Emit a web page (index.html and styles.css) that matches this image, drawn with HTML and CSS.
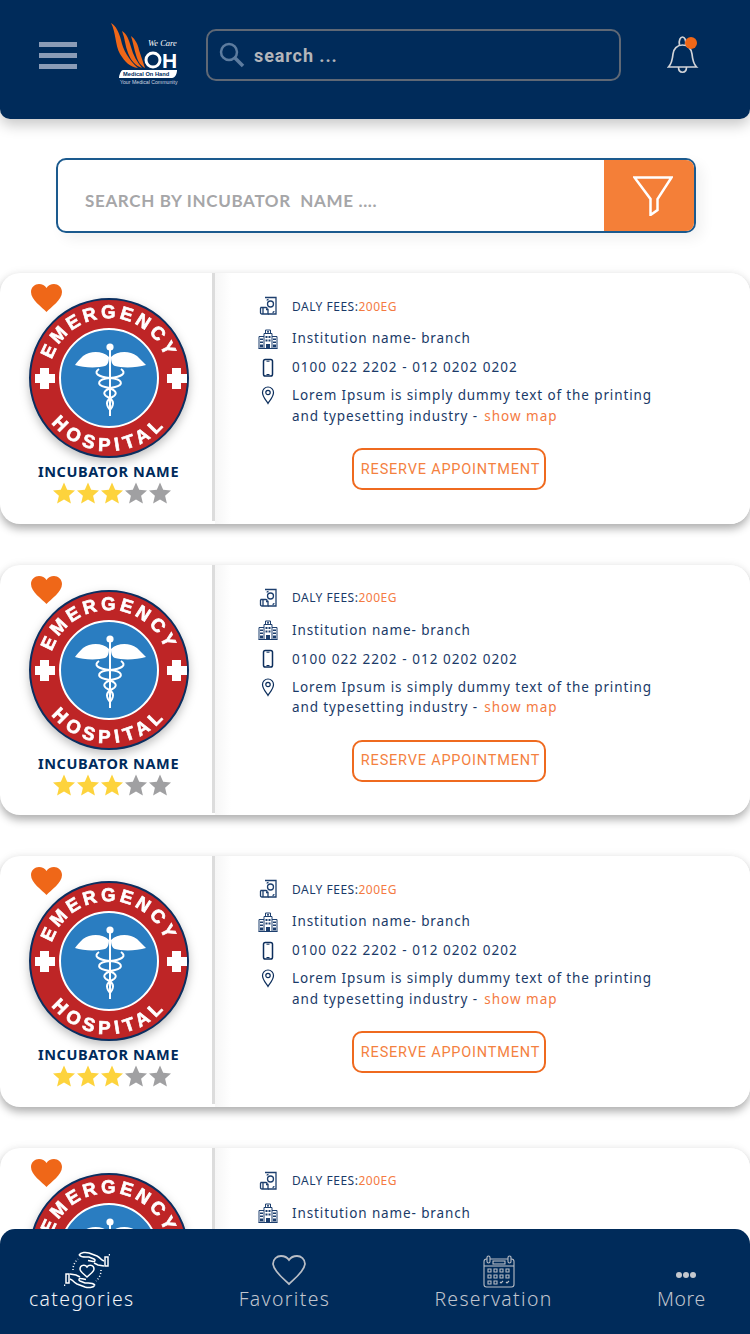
FILE: index.html
```html
<!DOCTYPE html>
<html lang="en">
    <head>
        <meta charset="UTF-8" />
        <meta name="viewport" content="width=device-width, initial-scale=1.0" />
        <title>Medical On Hand</title>
        <link rel="stylesheet" href="styles.css">
    </head>
    <body>
        <svg class="defs" aria-hidden="true">
            <defs>
                <path id="arc-top" d="M 23.6 100.5 A 60 60 0 1 1 136.4 100.5" />
                <path id="arc-bottom" d="M 7 80 A 73 73 0 0 0 153 80" />
            </defs>
            <symbol id="badge" viewBox="0 0 160 160">
                <circle cx="80" cy="80" r="79" fill="#be2526" stroke="#0b2f60" stroke-width="2" />
                <circle cx="80" cy="80" r="49" fill="#2a7dc1" stroke="#fff" stroke-width="2" />
                <text class="badge-text" text-anchor="middle"><textPath href="#arc-top" startOffset="50%">EMERGENCY</textPath></text>
                <text class="badge-text badge-text-low" text-anchor="middle"><textPath href="#arc-bottom" startOffset="50%">HOSPITAL</textPath></text>
                <path fill="#fff" d="M11 70h9v6h6v9h-6v6h-9v-6h-5v-9h5z" />
                <path fill="#fff" d="M143 70h9v6h6v9h-6v6h-9v-6h-5v-9h5z" />
                <circle cx="81" cy="49" r="3.6" fill="#fff" />
                <path fill="#fff" d="M80 59c-6-6-18-7-26-1-3 3-6 6-8 9 8 3 24 3 30 1 3-1 4-5 4-9zM82 59c6-6 18-7 26-1 3 3 6 6 9 9-9 3-25 3-31 1-3-1-4-5-4-9z" />
                <path fill="none" stroke="#fff" stroke-width="2" d="M81 52v66M70 71c-6 4-1 8 11 9 13 1 14 7 5 9-10 2-13 6-9 9 5 3 9 5 6 11-2 3-2 3-2 3M92 71c6 4 1 8-11 9-13 1-14 7-5 9 10 2 13 6 9 9-5 3-9 5-6 11 2 3 2 3 2 3" />
            </symbol>
            <symbol id="heart-solid" viewBox="0 0 31 28">
                <path fill="#ef6718" d="M15.5 28C11 23 0 16 0 8 0 3 4 0 8 0c3 0 6 1.500 7.500 4C17 1.500 20 0 23 0c4 0 8 3 8 8 0 8-11 15-15.500 20z" />
            </symbol>
            <symbol id="star" viewBox="0 0 24 24">
                <path d="M12 1.500l3.200 7.300 7.800.7-5.900 5.200 1.800 7.800-6.900-4.100-6.900 4.100 1.800-7.800L1 9.500l7.800-.7z" />
            </symbol>
            <symbol id="ico-fees" viewBox="0 0 20 20">
                <g fill="none" stroke="#1d3f6e" stroke-width="1.300">
                    <path d="M7 1.500h11v16.500H10" />
                    <circle cx="12.500" cy="8" r="3" />
                    <path d="M9 4.500c0-1 1-1 1.500-1M16 15c0 1-.5 1.500-1.500 1.500" />
                    <path d="M3 11.500h5c1.500 0 1.500 2 0 2h2v4.500H4c-1 0-1.500-.5-1.500-1.500v-4z" />
                    <path d="M5 11.500v6.500" />
                </g>
            </symbol>
            <symbol id="ico-building" viewBox="0 0 20 20">
                <g fill="none" stroke="#1d3f6e" stroke-width="1">
                    <path d="M.5 19.500h19M1 19.500V7.500h5M19 19.500V7.500h-5M6 19.500V4.500h8v15" />
                    <path d="M7.500 4.500V1h5v3.500" />
                    <path d="M10 1.800v2M9 2.800h2" />
                </g>
                <g fill="#1d3f6e">
                    <rect x="2" y="9.500" width="3" height="1.500" />
                    <rect x="2" y="12.500" width="3" height="1.500" />
                    <rect x="2" y="15.500" width="3" height="3" />
                    <rect x="15" y="9.500" width="3" height="1.500" />
                    <rect x="15" y="12.500" width="3" height="1.500" />
                    <rect x="15" y="15.500" width="3" height="3" />
                    <rect x="7.500" y="7" width="2" height="2" />
                    <rect x="10.500" y="7" width="2" height="2" />
                    <rect x="7.500" y="10.500" width="2" height="2" />
                    <rect x="10.500" y="10.500" width="2" height="2" />
                    <rect x="8" y="15" width="4" height="4.500" />
                </g>
            </symbol>
            <symbol id="ico-phone" viewBox="0 0 20 20">
                <rect x="5.500" y="1.500" width="9" height="16.500" rx="1.800" fill="none" stroke="#0c2e5c" stroke-width="1.500" />
                <path stroke="#0c2e5c" d="M8.500 3.200h3M8.500 16.500h3" />
            </symbol>
            <symbol id="ico-pin" viewBox="0 0 20 20">
                <path fill="none" stroke="#0c2e5c" stroke-width="1.200" d="M10 18.500C7.500 14.500 4.500 11.500 4.500 7.500a5.500 5.500 0 0 1 11 0c0 4-3 7-5.500 11z" />
                <circle cx="10" cy="7.500" r="2.200" fill="none" stroke="#0c2e5c" stroke-width="1.200" />
            </symbol>
        </svg>

        <header class="topbar">
            <div class="menu-btn"><span></span><span></span><span></span></div>
            <svg class="logo" viewBox="0 0 67 62">
                <path fill="#ef6718" d="M0 0c5 3 8 9 10 17 2 10 8 20 17 28-8-1-13-6-18-14C4 22 5 9 0 0z" />
                <path fill="#ef6718" d="M11 8c5 3 7 9 9 16 2 8 6 15 11 21-6-2-11-7-14-15-3-7-3-15-6-22z" />
                <path fill="#ef6718" d="M20 13c4 3 7 8 8 14 2 6 4 12 6 18-4-2-7-6-9-13-2-6-3-13-5-19z" />
                <text class="logo-care" x="37" y="23">We Care</text>
                <circle cx="42" cy="37" r="7" fill="none" stroke="#fff" stroke-width="3" />
                <text class="logo-oh" x="51" y="45">H</text>
                <path fill="#fff" d="M12 47h54c0 4-2 8-5 8H8c0-3 2-8 4-8z" />
                <text class="logo-med" x="12" y="53">Medical On Hand</text>
                <text class="logo-tag" x="9" y="61">Your Medical Community</text>
            </svg>
            <div class="top-search">
                <svg class="top-search-icon" viewBox="0 0 26 26">
                    <circle cx="10" cy="10" r="8" fill="none" stroke="#5d7c9f" stroke-width="2.500" />
                    <path d="M16 16l8 8" stroke="#5d7c9f" stroke-width="3.500" />
                </svg>
                <span>search ...</span>
            </div>
            <svg class="bell" viewBox="0 0 32 38">
                <g fill="none" stroke="#d2d4d8" stroke-width="1.700">
                    <path d="M1.500 31h28c-3-3-4-8-4.500-13-.5-5-4-9-9.500-9S6.500 13 6 18c-.5 5-1.500 10-4.500 13z" />
                    <path d="M12.500 9c-1-5 1-8 3-8s4 3 3 8" />
                    <path d="M11.500 31c0 7 8 7 8 0" />
                </g>
                <circle cx="24" cy="7" r="6" fill="#ef6718" />
            </svg>
        </header>

        <div class="filter-bar">
            <div class="filter-input">SEARCH BY INCUBATOR&nbsp; NAME ....</div>
            <div class="filter-btn">
                <svg viewBox="0 0 40 40">
                    <path fill="none" stroke="#fff" stroke-width="2.500" d="M1.500 1.500h37L24.500 23v11l-7 5V23z" />
                </svg>
            </div>
        </div>

        <main class="cards">
            <article class="card">
                <div class="card-left">
                    <svg class="fav"><use href="#heart-solid" /></svg>
                    <svg class="badge"><use href="#badge" /></svg>
                    <div class="name">INCUBATOR NAME</div>
                    <div class="stars">
                        <svg class="on"><use href="#star" /></svg>
                        <svg class="on"><use href="#star" /></svg>
                        <svg class="on"><use href="#star" /></svg>
                        <svg><use href="#star" /></svg>
                        <svg><use href="#star" /></svg>
                    </div>
                </div>
                <div class="card-right">
                    <div class="row row-fees"><svg><use href="#ico-fees" /></svg><p>DALY FEES:<span class="accent">200EG</span></p></div>
                    <div class="row row-inst"><svg><use href="#ico-building" /></svg><p>Institution name- branch</p></div>
                    <div class="row row-phone"><svg><use href="#ico-phone" /></svg><p>0100 022 2202 - 012 0202 0202</p></div>
                    <div class="row row-addr"><svg><use href="#ico-pin" /></svg><p>Lorem Ipsum is simply dummy text of the printing<br>and typesetting industry - <span class="accent">show map</span></p></div>
                    <button class="reserve">RESERVE APPOINTMENT</button>
                </div>
            </article>
            <article class="card">
                <div class="card-left">
                    <svg class="fav"><use href="#heart-solid" /></svg>
                    <svg class="badge"><use href="#badge" /></svg>
                    <div class="name">INCUBATOR NAME</div>
                    <div class="stars">
                        <svg class="on"><use href="#star" /></svg>
                        <svg class="on"><use href="#star" /></svg>
                        <svg class="on"><use href="#star" /></svg>
                        <svg><use href="#star" /></svg>
                        <svg><use href="#star" /></svg>
                    </div>
                </div>
                <div class="card-right">
                    <div class="row row-fees"><svg><use href="#ico-fees" /></svg><p>DALY FEES:<span class="accent">200EG</span></p></div>
                    <div class="row row-inst"><svg><use href="#ico-building" /></svg><p>Institution name- branch</p></div>
                    <div class="row row-phone"><svg><use href="#ico-phone" /></svg><p>0100 022 2202 - 012 0202 0202</p></div>
                    <div class="row row-addr"><svg><use href="#ico-pin" /></svg><p>Lorem Ipsum is simply dummy text of the printing<br>and typesetting industry - <span class="accent">show map</span></p></div>
                    <button class="reserve">RESERVE APPOINTMENT</button>
                </div>
            </article>
            <article class="card">
                <div class="card-left">
                    <svg class="fav"><use href="#heart-solid" /></svg>
                    <svg class="badge"><use href="#badge" /></svg>
                    <div class="name">INCUBATOR NAME</div>
                    <div class="stars">
                        <svg class="on"><use href="#star" /></svg>
                        <svg class="on"><use href="#star" /></svg>
                        <svg class="on"><use href="#star" /></svg>
                        <svg><use href="#star" /></svg>
                        <svg><use href="#star" /></svg>
                    </div>
                </div>
                <div class="card-right">
                    <div class="row row-fees"><svg><use href="#ico-fees" /></svg><p>DALY FEES:<span class="accent">200EG</span></p></div>
                    <div class="row row-inst"><svg><use href="#ico-building" /></svg><p>Institution name- branch</p></div>
                    <div class="row row-phone"><svg><use href="#ico-phone" /></svg><p>0100 022 2202 - 012 0202 0202</p></div>
                    <div class="row row-addr"><svg><use href="#ico-pin" /></svg><p>Lorem Ipsum is simply dummy text of the printing<br>and typesetting industry - <span class="accent">show map</span></p></div>
                    <button class="reserve">RESERVE APPOINTMENT</button>
                </div>
            </article>
            <article class="card">
                <div class="card-left">
                    <svg class="fav"><use href="#heart-solid" /></svg>
                    <svg class="badge"><use href="#badge" /></svg>
                </div>
                <div class="card-right">
                    <div class="row row-fees"><svg><use href="#ico-fees" /></svg><p>DALY FEES:<span class="accent">200EG</span></p></div>
                    <div class="row row-inst"><svg><use href="#ico-building" /></svg><p>Institution name- branch</p></div>
                </div>
            </article>
        </main>

        <nav class="tabbar">
            <div class="tab tab-active">
                <svg class="tab-icon" viewBox="0 0 46 38">
                    <g fill="none" stroke="#fff" stroke-width="1.500">
                        <g id="hand-top">
                            <path d="M15 4c2-3 7-3 10-2l8 3c2 1 4 3 5 4l2 1M15 4c3 3 7 2 10 2l5 2c2 1 1 3-1 2.500l-5-1M30 12l4 2 6 1" />
                            <path d="M41 6v9h3V6zM45.500 3v1.500" />
                        </g>
                        <use href="#hand-top" transform="rotate(180 23 19)" />
                        <path d="M23 26c-3-3-7-5-7-8 0-4 5-5 7-2 2-3 7-2 7 2 0 3-4 5-7 8z" />
                        <path d="M9 19a14 14 0 0 1 5-11M37 19a14 14 0 0 1-5 11" stroke-dasharray="1 2" />
                    </g>
                </svg>
                <span>categories</span>
            </div>
            <div class="tab">
                <svg class="tab-icon" viewBox="0 0 46 38">
                    <path fill="none" stroke="#b9bec6" stroke-width="1.800" d="M23 33C19 29 8 21 7 13c0-5 4-8 8-8 3 0 6 1 8 4 2-3 5-4 8-4 4 0 8 3 8 8-1 8-12 16-16 20z" />
                </svg>
                <span>Favorites</span>
            </div>
            <div class="tab">
                <svg class="tab-icon" viewBox="0 0 46 38">
                    <g fill="none" stroke="#b9bec6" stroke-width="1.100" transform="translate(0 4)">
                        <rect x="8" y="4" width="30" height="28" rx="2.500" />
                        <path d="M8 11h30" />
                        <rect x="11" y="1" width="3" height="7" rx="1.500" fill="#002b5a" />
                        <rect x="32" y="1" width="3" height="7" rx="1.500" fill="#002b5a" />
                        <rect x="17" y="6" width="12" height="3" />
                        <path d="M12 14h3v3h-3zM18 14h3v3h-3zM24 14h3v3h-3zM30 14h3v3h-3zM12 20h3v3h-3zM18 20h3v3h-3zM24 20h3v3h-3zM30 20h3v3h-3zM12 26h3v3h-3zM18 26h3v3h-3zM24 27l1 1 2-2M30 27l1 1 2-2" />
                    </g>
                </svg>
                <span>Reservation</span>
            </div>
            <div class="tab tab-more">
                <svg class="tab-icon" viewBox="0 0 46 38">
                    <g fill="#c4c8ce">
                        <circle cx="16" cy="24" r="3" />
                        <circle cx="23" cy="24" r="3" />
                        <circle cx="30" cy="24" r="3" />
                    </g>
                </svg>
                <span>More</span>
            </div>
        </nav>
    </body>
</html>
```

FILE: styles.css
```css
* {
    box-sizing: border-box;
}
html,
body {
    height: 1334px;
}
body {
    margin: 0;
    overflow: hidden;
    background: #fff;
    font-family: "Noto Sans", "Open Sans", sans-serif;
    color: #0c2e5c;
}
.defs {
    position: absolute;
    width: 0;
    height: 0;
}

/* header */
.topbar {
    display: flex;
    align-items: flex-start;
    height: 119px;
    padding: 23px 0 0 39px;
    background: #002b5a;
    border-radius: 0 0 10px 10px;
    box-shadow: 0 6px 14px rgba(0, 0, 0, 0.22);
}
.menu-btn {
    display: flex;
    flex-direction: column;
    gap: 6px;
    width: 38px;
    margin-top: 19px;
}
.menu-btn span {
    height: 5px;
    background: #8a9bb6;
}
.logo {
    width: 67px;
    height: 62px;
    margin-left: 34px;
}
.logo-care {
    font: italic 8.500px "Liberation Serif", serif;
    fill: #fff;
}
.logo-oh {
    font: bold 21px "Liberation Sans", sans-serif;
    fill: #fff;
}
.logo-med {
    font: bold 5.700px "Liberation Sans", sans-serif;
    fill: #002b5a;
}
.logo-tag {
    font: 5.200px "Liberation Sans", sans-serif;
    fill: #cfd6e0;
}
.top-search {
    display: flex;
    align-items: center;
    width: 415px;
    height: 52px;
    margin: 6px 0 0 28px;
    padding-left: 11px;
    border: 2px solid #5f6875;
    border-radius: 10px;
    font: 700 18px "Roboto", sans-serif;
    letter-spacing: 0.900px;
    color: #b4b6ba;
}
.top-search-icon {
    width: 26px;
    height: 26px;
    margin-right: 9px;
}
.bell {
    width: 32px;
    height: 38px;
    margin: 13px 0 0 46px;
}

/* search by name */
.filter-bar {
    display: flex;
    width: 640px;
    height: 75px;
    margin: 39px 0 40px 56px;
    border: 2px solid #1b5a8e;
    border-radius: 10px;
    overflow: hidden;
    box-shadow: 6px 6px 14px rgba(0, 0, 0, 0.06);
}
.filter-input {
    flex: 1;
    align-self: center;
    padding: 10px 0 0 27px;
    font: 700 17px "Lato", sans-serif;
    letter-spacing: 0.650px;
    color: #a6a6a8;
}
.filter-btn {
    display: flex;
    align-items: center;
    justify-content: center;
    width: 90px;
    padding-left: 8px;
    background: #f47f38;
}
.filter-btn svg {
    width: 40px;
    height: 40px;
}

/* cards */
.cards {
    display: flex;
    flex-direction: column;
    gap: 41px;
}
.card {
    display: flex;
    flex: none;
    height: 250.670px;
    background: #fff;
    border-radius: 20px;
    box-shadow: 0 5px 9px rgba(0, 0, 0, 0.3), 0 -2px 8px rgba(0, 0, 0, 0.04);
}
.card-left {
    position: relative;
    display: flex;
    flex-direction: column;
    align-items: center;
    flex: none;
    width: 215px;
    height: 248px;
    padding: 25px 0 0 5px;
    border-right: 3px solid #dcdcdc;
}
.fav {
    position: absolute;
    top: 11px;
    left: 31px;
    width: 31px;
    height: 28px;
}
.badge {
    flex: none;
    width: 160px;
    height: 160px;
    filter: drop-shadow(0 4px 5px rgba(0, 0, 0, 0.25));
}
.badge-text {
    font: bold 18.500px "Liberation Sans", sans-serif;
    letter-spacing: 3.500px;
    fill: #fff;
    stroke: #fff;
    stroke-width: 0.700;
}
.badge-text-low {
    letter-spacing: 5px;
}
.name {
    margin-top: 3px;
    font-size: 14.500px;
    font-weight: 700;
    line-height: 20px;
    letter-spacing: 0.600px;
    color: #002b5c;
    white-space: nowrap;
}
.stars {
    display: flex;
    margin-left: 6px;
}
.stars svg {
    width: 24px;
    height: 24px;
    fill: #a0a0a2;
}
.stars svg.on {
    fill: #fdd33c;
}
.card-right {
    flex: 1;
    display: flex;
    flex-direction: column;
    align-items: flex-start;
    padding: 22.500px 0 0 43px;
    background: linear-gradient(to right, #f6f6f6, #fff 16px);
    border-radius: 0 20px 20px 0;
}
.row {
    display: flex;
    align-items: center;
    gap: 14px;
    font-size: 13.500px;
    letter-spacing: 0.880px;
    line-height: 21px;
    color: #1a3a68;
}
.row svg {
    flex: none;
    width: 20px;
    height: 20px;
}
.row p {
    margin: 0;
    white-space: nowrap;
}
.row-fees {
    font-size: 12px;
    letter-spacing: 0.500px;
}
.row-inst {
    margin-top: 11.500px;
}
.row-phone {
    margin-top: 8px;
    letter-spacing: 1.050px;
}
.row-addr {
    align-items: flex-start;
    margin-top: 7px;
    line-height: 20.500px;
}
.accent {
    color: #f47a42;
}
.row-addr .accent {
    margin-left: 2px;
    letter-spacing: 1px;
}
.reserve {
    align-self: flex-start;
    width: 194px;
    height: 42px;
    margin: 22px 0 0 94px;
    padding: 0 0 0 3px;
    background: #fff;
    border: 2px solid #ef6a1f;
    border-radius: 10px;
    font: 400 14.500px "Roboto", sans-serif;
    letter-spacing: 0.800px;
    color: #f4813f;
    white-space: nowrap;
}

/* bottom tabs */
.tabbar {
    position: fixed;
    left: 0;
    right: 0;
    bottom: 0;
    display: flex;
    justify-content: space-between;
    height: 105px;
    padding: 22px 44px 0 29px;
    background: #002b5a;
    border-radius: 15px 15px 0 0;
}
.tab {
    display: flex;
    flex-direction: column;
    align-items: center;
    font-size: 19.400px;
    font-weight: 300;
    letter-spacing: 1.350px;
    line-height: 26px;
    color: #c0c5ce;
}
.tab-active {
    color: #f2f4f7;
}
.tab-more {
    letter-spacing: 0.700px;
}
.tab-icon {
    width: 46px;
    height: 38px;
    margin-bottom: -3px;
    transform: translateX(5px);
}
```
